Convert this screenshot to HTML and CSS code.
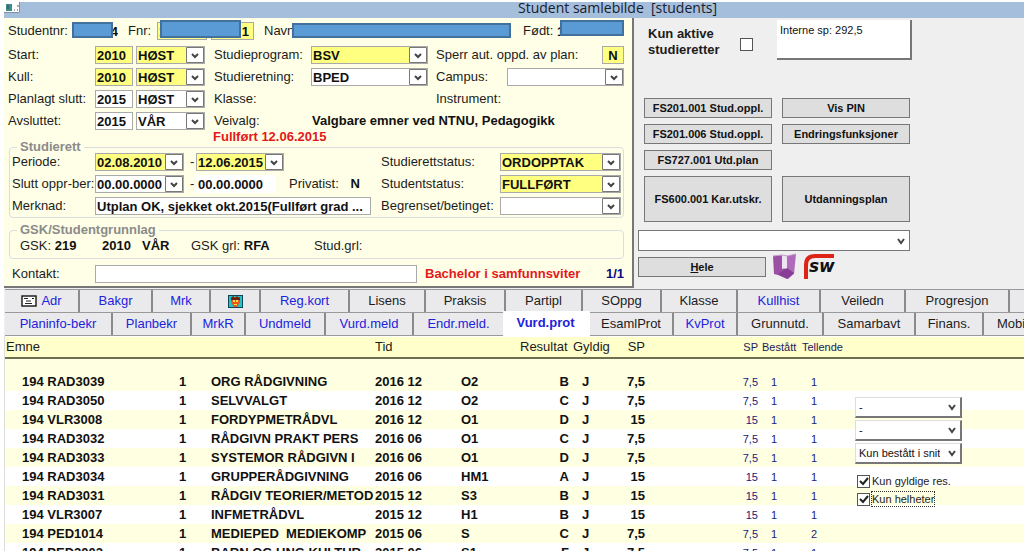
FILE: index.html
```html
<!DOCTYPE html>
<html lang="no">
<head>
<meta charset="utf-8">
<title>Student samlebilde</title>
<link rel="stylesheet" href="styles.css">
</head>
<body>
<header class="titlebar">
  <svg class="app-icon" width="16" height="11" viewBox="0 0 16 11" aria-hidden="true"><rect width="16" height="11" fill="#fff"/><rect x="2" y="2" width="6" height="7" fill="#3f8f80"/><rect x="3" y="3" width="2" height="4" fill="#39618f"/><path d="M10 8h1M13 8h1M14 3v2" stroke="#555"/><path d="M0 10.500h15.500V0" fill="none" stroke="#7f93a8"/></svg>
  <h1 class="title">Student samlebilde&nbsp; [students]</h1>
</header>

<main class="workspace">
<div class="top">
  <form class="student">
    <div class="identity">
      <label for="nr">Studentnr:</label>
      <span class="masked"><input id="nr" class="bare right" value="4"><i class="mask mask-nr"></i></span>
      <label for="fnr">Fnr:</label>
      <span class="masked pair"><input id="fnr" class="field yellow" value="1"><input class="field yellow right" aria-label="Personnr" value="1"><i class="mask mask-fnr"></i></span>
      <label for="navn">Navn</label>
      <span class="masked"><input id="navn" class="bare"><i class="mask mask-name"></i></span>
      <label for="fodt">Født:</label>
      <span class="masked"><input id="fodt" class="bare" value="1"><i class="mask mask-born"></i></span>
    </div>

    <div class="grid">
      <label for="start">Start:</label>
      <input id="start" class="field yellow year" value="2010">
      <select class="combo yellow term" aria-label="Starttermin"><option>HØST</option></select>
      <label for="prog">Studieprogram:</label>
      <select id="prog" class="combo yellow program"><option>BSV</option></select>
      <label for="sperr" class="wide">Sperr aut. oppd. av plan:</label>
      <input id="sperr" class="field yellow flag" value="N">

      <label for="kull">Kull:</label>
      <input id="kull" class="field yellow year" value="2010">
      <select class="combo yellow term" aria-label="Kulltermin"><option>HØST</option></select>
      <label for="retn">Studieretning:</label>
      <select id="retn" class="combo program"><option>BPED</option></select>
      <label for="campus">Campus:</label>
      <select id="campus" class="combo campus"><option></option></select>

      <label for="plan">Planlagt slutt:</label>
      <input id="plan" class="field year" value="2015">
      <select class="combo term" aria-label="Planlagt termin"><option>HØST</option></select>
      <span class="pairspan">Klasse:</span>
      <span class="tail">Instrument:</span>

      <label for="avs">Avsluttet:</label>
      <input id="avs" class="field year" value="2015">
      <select class="combo term" aria-label="Avsluttet termin"><option>VÅR</option></select>
      <span>Veivalg:</span>
      <b class="rest">Valgbare emner ved NTNU, Pedagogikk</b>
    </div>
    <p class="done">Fullført 12.06.2015</p>

    <fieldset class="group rights">
      <legend>Studierett</legend>
      <div class="rights-grid">
        <label for="fra">Periode:</label>
        <select id="fra" class="combo yellow"><option>02.08.2010</option></select>
        <span class="dash">-</span>
        <select class="combo yellow" aria-label="Periode til"><option>12.06.2015</option></select>
        <span></span>
        <label for="rstat">Studierettstatus:</label>
        <select id="rstat" class="combo yellow"><option>ORDOPPTAK</option></select>

        <label for="slutt">Slutt oppr-ber:</label>
        <select id="slutt" class="combo"><option>00.00.0000</option></select>
        <span class="dash">-</span>
        <input class="bare white" aria-label="Beregnet slutt" value="00.00.0000">
        <span class="private">Privatist: <b>N</b></span>
        <label for="sstat">Studentstatus:</label>
        <select id="sstat" class="combo yellow"><option>FULLFØRT</option></select>

        <label for="merk">Merknad:</label>
        <input id="merk" class="field remark" value="Utplan OK, sjekket okt.2015(Fullført grad ...">
        <label for="begr">Begrenset/betinget:</label>
        <select id="begr" class="combo"><option></option></select>
      </div>
    </fieldset>

    <fieldset class="group basis">
      <legend>GSK/Studentgrunnlag</legend>
      <div class="basis-row">
        <span>GSK: <b>219</b></span><b>2010</b><b>VÅR</b><span>GSK grl: <b>RFA</b></span><span>Stud.grl:</span>
      </div>
    </fieldset>

    <div class="contact">
      <label for="kontakt">Kontakt:</label>
      <input id="kontakt" class="field">
      <b class="degree">Bachelor i samfunnsviter</b>
      <b class="count">1/1</b>
    </div>
  </form>

  <aside class="side">
    <div class="side-head">
      <label for="aktive">Kun aktive studieretter</label>
      <input id="aktive" type="checkbox" class="check">
      <textarea class="note" aria-label="Studiepoeng" readonly>Interne sp: 292,5</textarea>
    </div>
    <div class="buttons">
      <button type="button">FS201.001 Stud.oppl.</button>
      <button type="button">Vis PIN</button>
      <button type="button">FS201.006 Stud.oppl.</button>
      <button type="button">Endringsfunksjoner</button>
      <button type="button">FS727.001 Utd.plan</button>
      <button type="button" class="tall first-col">FS600.001 Kar.utskr.</button>
      <button type="button" class="tall">Utdanningsplan</button>
    </div>
    <select class="combo flat report" aria-label="Rapport"><option></option></select>
    <div class="launch">
      <button type="button" class="whole"><u>H</u>ele</button>
      <svg width="25" height="28" viewBox="0 0 25 28" aria-hidden="true"><path d="M1 3 10 2v13l5 1 0 10-9-4-4-1z" fill="#9b4fa5"/><path d="M15 3 24 1l-2 20-6 4-1-9z" fill="#b06cba"/><path d="M6 21l9-6 7 5-6 6z" fill="#8a3d96"/><path d="m10 3 5-1v12l-5 2z" fill="#f0e4f3"/><path d="M1 3 10 2l5 1 9-2" fill="none" stroke="#c79bd0"/></svg>
      <svg width="34" height="28" viewBox="0 0 34 28" aria-hidden="true"><path d="M3 26V12Q3 3 12 3h19" fill="none" stroke="#dd2517" stroke-width="4"/><text x="6" y="19" class="sw">sw</text></svg>
    </div>
  </aside>
</div>

<nav class="tabs">
  <div class="tabrow first">
    <a href="#" class="blue"><svg width="16" height="12" viewBox="0 0 16 12" aria-hidden="true"><rect x="1" y="1" width="14" height="10" fill="#fff" stroke="#222" stroke-width="1.500"/><path d="M3 3.500h4M5 6h5M4 8.500h7M11 3.500h2" stroke="#222"/></svg>Adr</a>
    <a href="#" class="blue">Bakgr</a><a href="#" class="blue">Mrk</a>
    <a href="#" aria-label="Bilde"><svg width="15" height="13" viewBox="0 0 15 13" aria-hidden="true"><rect x=".5" y=".5" width="14" height="12" fill="#22c4c4" stroke="#145"/><path d="M3 2h9v5l-3 5H6L3 7z" fill="#e8541c"/><path d="M3 3l2-2 2 2 2-2 2 2 1-1v3H3z" fill="#6b2412"/><path d="M5 5h2v2H5zM8 5h2v2H8zM6 9h3v1H6z" fill="#ffe34a"/></svg></a>
    <a href="#" class="blue">Reg.kort</a><a href="#">Lisens</a><a href="#">Praksis</a><a href="#">Partipl</a><a href="#">SOppg</a><a href="#">Klasse</a><a href="#" class="blue">Kullhist</a><a href="#">Veiledn</a><a href="#">Progresjon</a><a href="#" aria-label="Mer"></a>
  </div>
  <div class="tabrow second">
    <a href="#" class="blue">Planinfo-bekr</a><a href="#" class="blue">Planbekr</a><a href="#" class="blue">MrkR</a><a href="#" class="blue">Undmeld</a><a href="#" class="blue">Vurd.meld</a><a href="#" class="blue">Endr.meld.</a><a href="#" class="blue current" aria-current="page">Vurd.prot</a><a href="#">EsamlProt</a><a href="#" class="blue">KvProt</a><a href="#">Grunnutd.</a><a href="#">Samarbavt</a><a href="#">Finans.</a><a href="#" class="cut">Mobi</a>
  </div>
</nav>

<section class="results">
  <table class="marks">
    <colgroup><col class="c-code"><col class="c-no"><col class="c-name"><col class="c-time"><col class="c-kind"><col class="c-res"><col class="c-valid"><col class="c-sp"><col class="c-sp2"><col class="c-pass"><col></colgroup>
    <thead>
      <tr><th class="subject">Emne</th><th></th><th></th><th>Tid</th><th></th><th>Resultat</th><th>Gyldig</th><th class="num">SP</th><th class="num small">SP</th><th class="small">Bestått</th><th class="small">Tellende</th></tr>
    </thead>
    <tbody>
      <tr class="spacer"><td colspan="11"></td></tr>
      <tr><td>194 RAD3039</td><td>1</td><td>ORG RÅDGIVNING</td><td>2016 12</td><td>O2</td><td>B</td><td>J</td><td>7,5</td><td>7,5</td><td>1</td><td>1</td></tr>
      <tr><td>194 RAD3050</td><td>1</td><td>SELVVALGT</td><td>2016 12</td><td>O2</td><td>C</td><td>J</td><td>7,5</td><td>7,5</td><td>1</td><td>1</td></tr>
      <tr><td>194 VLR3008</td><td>1</td><td>FORDYPMETRÅDVL</td><td>2016 12</td><td>O1</td><td>D</td><td>J</td><td>15</td><td>15</td><td>1</td><td>1</td></tr>
      <tr><td>194 RAD3032</td><td>1</td><td>RÅDGIVN PRAKT PERS</td><td>2016 06</td><td>O1</td><td>C</td><td>J</td><td>7,5</td><td>7,5</td><td>1</td><td>1</td></tr>
      <tr><td>194 RAD3033</td><td>1</td><td>SYSTEMOR RÅDGIVN I</td><td>2016 06</td><td>O1</td><td>D</td><td>J</td><td>7,5</td><td>7,5</td><td>1</td><td>1</td></tr>
      <tr><td>194 RAD3034</td><td>1</td><td>GRUPPERÅDGIVNING</td><td>2016 06</td><td>HM1</td><td>A</td><td>J</td><td>15</td><td>15</td><td>1</td><td>1</td></tr>
      <tr><td>194 RAD3031</td><td>1</td><td>RÅDGIV TEORIER/METOD</td><td>2015 12</td><td>S3</td><td>B</td><td>J</td><td>15</td><td>15</td><td>1</td><td>1</td></tr>
      <tr><td>194 VLR3007</td><td>1</td><td>INFMETRÅDVL</td><td>2015 12</td><td>H1</td><td>B</td><td>J</td><td>15</td><td>15</td><td>1</td><td>1</td></tr>
      <tr><td>194 PED1014</td><td>1</td><td>MEDIEPED&nbsp; MEDIEKOMP</td><td>2015 06</td><td>S</td><td>C</td><td>J</td><td>7,5</td><td>7,5</td><td>1</td><td>2</td></tr>
      <tr><td>194 PED2002</td><td>1</td><td>BARN OG UNG KULTUR</td><td>2015 06</td><td>S1</td><td>F</td><td>J</td><td>7,5</td><td>7,5</td><td>1</td><td>1</td></tr>
    </tbody>
  </table>
  <div class="filters">
    <select class="combo flat raised" aria-label="Filter 1"><option>-</option></select>
    <select class="combo flat raised" aria-label="Filter 2"><option>-</option></select>
    <select class="combo flat raised" aria-label="Snitt"><option>Kun bestått i snitt</option></select>
    <label class="tick"><input type="checkbox" class="check" checked><span>Kun gyldige res.</span></label>
    <label class="tick"><input type="checkbox" class="check" checked><span class="focused">Kun helheter</span></label>
  </div>
</section>
</main>
</body>
</html>
```
FILE: styles.css
```css
* { box-sizing: border-box; }

body {
  margin: 0;
  padding: 2px 0 9px 4px;
  height: 100vh;
  display: flex;
  flex-direction: column;
  overflow: hidden;
  background: #fff;
  color: #1c1c1c;
  font: 13px/18px "Liberation Sans", Arial, sans-serif;
}

input, select, textarea, button { font: inherit; color: #111; margin: 0; border-radius: 0; }
input, select { font-weight: bold; }
b { color: #111; }

/* Title bar */
.titlebar {
  flex: none;
  display: flex;
  align-items: flex-start;
  height: 16px;
  background: #a5bedb;
}
.title {
  flex: 1;
  margin: 0 0 0 498px;
  font: 14px/12px "Open Sans", "Noto Sans", sans-serif;
  color: #16202e;
  white-space: nowrap;
}

.workspace { flex: 1; min-height: 0; display: flex; flex-direction: column; }
.top { flex: none; display: grid; grid-template-columns: minmax(0, 630fr) minmax(0, 390fr); }

/* Student form */
.student {
  padding: 0 8px 0 4px;
  background: #ffffe7;
  border: solid #777;
  border-width: 0 2px 2px 0;
  white-space: nowrap;
}
.field, .bare {
  width: 100%;
  min-width: 0;
  height: 18px;
  padding: 1px 1px 0;
  border: 1px solid #aaa;
  background: #fff;
  outline: 0;
}
.bare { border-color: transparent; background: transparent; }
.white { background: #fff; width: 80px; }
.right { text-align: right; }
.combo {
  appearance: none;
  width: 100%;
  min-width: 0;
  height: 18px;
  padding: 0 20px 0 1px;
  border: 1px solid #aaa;
  background: #fff url("data:image/svg+xml,%3Csvg xmlns='http://www.w3.org/2000/svg' width='18' height='16'%3E%3Cpath d='M.5.5h17v15H.5z' fill='%23fff' stroke='%23777'/%3E%3Cpath d='M6 7l3 3 3-3' fill='none' stroke='%23444' stroke-width='2'/%3E%3C/svg%3E") no-repeat right center;
}
.yellow { background-color: #ffff80; }
.flat {
  background-image: url("data:image/svg+xml,%3Csvg xmlns='http://www.w3.org/2000/svg' width='16' height='16'%3E%3Cpath d='M5 6l3 4 3-4' fill='none' stroke='%23444' stroke-width='2'/%3E%3C/svg%3E");
}

.identity {
  display: grid;
  grid-template-columns: 64px 56px 29px 107px 28px 231px 32px 1fr;
  align-items: center;
  height: 26px;
}
.masked { position: relative; display: flex; }
.pair { display: grid; grid-template-columns: 50px 43px; gap: 4px; }
.pair .right { padding-right: 4px; }
.mask { position: absolute; background: #5b9bd5; border: 2px solid #41719c; }
.mask-nr { left: 0; top: 0; width: 41px; height: 16px; }
.mask-fnr { left: 3px; top: -2px; width: 81px; height: 18px; }
.mask-name { left: 0; top: 1px; width: 219px; height: 15px; }
.mask-born { left: 5px; right: 0; top: -2px; height: 16px; }
#nr { width: 48px; }

.grid {
  display: grid;
  grid-template-columns: 87px 41px 78px 97px 125px 71px 1fr;
  grid-auto-rows: 22px;
  align-items: center;
}
.year { width: 38px; }
.term { width: 69px; }
.program { width: 117px; }
.wide { grid-column: 6; }
.flag { grid-column: 7; width: 22px; justify-self: end; text-align: center; }
.pairspan { grid-column: 4 / 6; }
.tail { grid-column: 6 / 8; }
.rest { grid-column: 5 / 8; padding-left: 1px; }
.done { margin: 0 0 0 205px; height: 11px; line-height: 10px; color: #e3191b; font-weight: bold; }

.group { margin: 0 0 0 1px; padding: 0; border: 1px solid #d9dde0; border-radius: 4px; min-width: 0; }
.group legend { margin-left: 7px; padding: 0 3px; line-height: 8px; font-weight: bold; color: #8b8b8b; }
.rights-grid {
  display: grid;
  grid-template-columns: 83px 89px 12px 88px 97px 119px 1fr;
  grid-auto-rows: 22px;
  align-items: center;
  padding: 0 2px;
}
.dash { padding-left: 6px; }
.private { padding-left: 5px; }
.private b { margin-left: 8px; }
.remark { grid-column: 2 / 6; width: 276px; }
.basis { margin-top: 8px; }
.basis-row {
  display: grid;
  grid-template-columns: 82px 40px 49px 123px 1fr;
  align-items: center;
  height: 24px;
  padding-left: 10px;
}
.contact {
  display: grid;
  grid-template-columns: 83px 322px 1fr auto;
  align-items: center;
  height: 27px;
  padding: 2px 0 0 4px;
}
.degree { padding-left: 8px; color: #e3191b; }
.count { color: #0c0c80; }

/* Side panel */
.side { padding: 2px 0 0 4px; background: #efefef; }
.side-head {
  display: grid;
  grid-template-columns: 92px 37px 135px;
  height: 78px;
  padding-left: 10px;
  font-weight: bold;
  line-height: 16px;
}
.side-head label { padding-top: 6px; width: 80px; }
.side-head .check { margin-top: 18px; }
.check {
  appearance: none;
  width: 13px;
  height: 13px;
  flex: none;
  border: 1px solid #555;
  background: #fff;
}
.check:checked {
  background: #fff url("data:image/svg+xml,%3Csvg xmlns='http://www.w3.org/2000/svg' width='11' height='11'%3E%3Cpath d='M2 5l3 3 5-6' fill='none' stroke='%23222' stroke-width='2'/%3E%3C/svg%3E");
}
.note {
  height: 40px;
  padding: 3px;
  resize: none;
  overflow: hidden;
  border: solid #777;
  border-width: 0 2px 2px 0;
  background: #fff;
  font-size: 11px;
  font-weight: normal;
  line-height: 14px;
}
.buttons {
  display: grid;
  grid-template-columns: 128px 128px;
  gap: 6px 10px;
  padding-left: 6px;
}
.side button {
  height: 20px;
  padding: 0;
  border: 1px solid #777;
  background: #dedede;
  font-size: 11px;
  font-weight: bold;
  white-space: nowrap;
}
.side .tall { height: 46px; }
.first-col { grid-column: 1; }
.report { display: block; width: 272px; height: 21px; margin: 8px 0 2px; border-color: #777; }
.launch { display: flex; align-items: center; gap: 6px; }
.side .whole { width: 128px; }
.sw { font: italic bold 17px "DejaVu Sans", sans-serif; fill: #111; }

/* Tabs */
.tabs { flex: none; padding: 1px 0 0 1px; background: #efefef; }
.tabrow { display: grid; border-top: 1px solid #999; }
.first { grid-template-columns: 75fr 73fr 58fr 50fr 89fr 76fr 80fr 77fr 79fr 76fr 83fr 85fr 104fr 14fr; }
.second { grid-template-columns: 108fr 79fr 54fr 80fr 88fr 91fr 85fr 84fr 64fr 86fr 92fr 68fr 40fr; border-bottom: 1px solid #999; }
.tabrow a {
  display: flex;
  align-items: center;
  justify-content: center;
  gap: 4px;
  min-width: 0;
  height: 22px;
  overflow: hidden;
  border-right: 2px solid #8a8a8a;
  background: #eaeaec;
  color: #1c1c1c;
  text-decoration: none;
  white-space: nowrap;
}
.tabrow a:last-child { border-right: 0; }
.tabrow .blue { color: #2222dd; }
.tabrow .current {
  height: 26px;
  margin: -2px 0 -2px -2px;
  padding-bottom: 3px;
  background: #fff;
  border-right-color: #fff;
  font-weight: bold;
}
.tabrow .cut { justify-content: flex-start; padding-left: 13px; }

/* Results */
.results { position: relative; flex: 1; min-height: 0; overflow: hidden; border-left: 1px solid #ddd; padding-top: 1px; }
.marks { width: 100%; table-layout: fixed; border-collapse: collapse; white-space: nowrap; }
.c-code { width: 170px; }
.c-no { width: 32px; }
.c-name { width: 164px; }
.c-time { width: 86px; }
.c-kind { width: 59px; }
.c-res { width: 53px; }
.c-valid { width: 54px; }
.c-sp { width: 22px; }
.c-sp2 { width: 113px; }
.c-pass { width: 40px; }
.marks th {
  height: 21px;
  padding: 0 0 0 4px;
  border-bottom: 2px solid #6e6e50;
  background: #ffffcc;
  font-weight: normal;
  text-align: left;
}
.marks .subject { padding-left: 1px; }
.marks .num { padding: 0; text-align: right; }
.marks .small { font-size: 11px; color: #202060; }
.marks td { height: 19px; padding: 0 0 0 4px; font-weight: bold; color: #111; }
.marks .spacer td { height: 14px; }
.marks tbody tr:nth-child(even), .marks .spacer { background: #ffffe1; }
.marks td:nth-child(1) { padding-left: 17px; }
.marks td:nth-child(6) { padding: 0; text-align: right; }
.marks td:nth-child(7) { padding-left: 13px; }
.marks td:nth-child(8) { padding: 0; text-align: right; }
.marks td:nth-child(n+9) { font-size: 11px; font-weight: normal; color: #20207c; padding-left: 13px; }
.marks td:nth-child(9) { padding: 0; text-align: right; }

/* Filters lie over the right part of the table */
.filters {
  position: absolute;
  left: 850px;
  top: 61px;
  width: 107px;
  display: flex;
  flex-direction: column;
  gap: 2px;
}
.raised {
  height: 21px;
  padding-left: 3px;
  border: solid #777;
  border-color: #ddd #777 #777 #ddd;
  border-width: 1px 2px 2px 1px;
  font-size: 11px;
  font-weight: normal;
}
.tick { display: flex; align-items: center; gap: 2px; height: 16px; padding-left: 2px; font-size: 11px; line-height: 14px; white-space: nowrap; }
.raised + .tick { margin-top: 7px; }
.focused { outline: 1px dotted #333; }
```
